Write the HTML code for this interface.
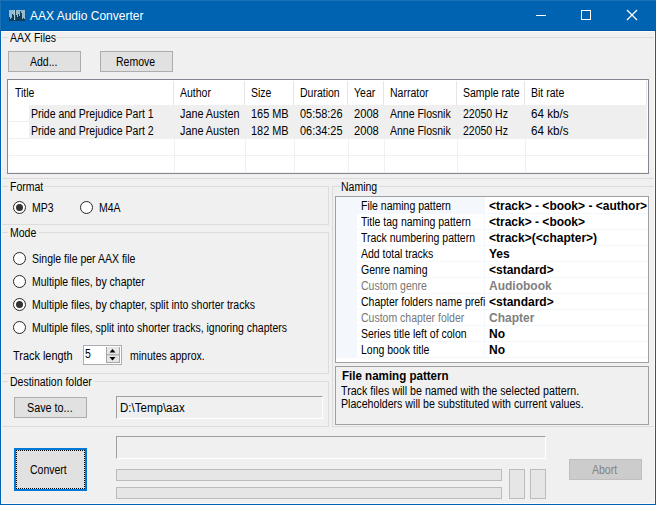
<!DOCTYPE html>
<html><head><meta charset="utf-8">
<style>
*{box-sizing:border-box;margin:0;padding:0}
html,body{width:656px;height:505px;overflow:hidden}
body{position:relative;background:#0063B1;font-family:"Liberation Sans",sans-serif;font-size:12px;color:#000}
.a{position:absolute}
.t{position:absolute;white-space:nowrap;line-height:14px;font-size:12px;transform-origin:0 0}
.radio{position:absolute;width:13px;height:13px;border-radius:50%;border:1px solid #262626;background:#fff}
.radio.on::after{content:"";position:absolute;left:2px;top:2px;width:7px;height:7px;border-radius:50%;background:#333}
</style></head><body>
<div class="a" style="left:0px;top:0px;width:656px;height:1px;background:#1B71B5"></div>
<div class="a" style="left:0px;top:0px;width:1px;height:31px;background:#1B71B5"></div>
<div class="a" style="left:0px;top:30px;width:656px;height:1px;background:#0059A8"></div>
<div class="a" style="left:1px;top:31px;width:654px;height:473px;background:#F0F0F0"></div>
<div class="a" style="left:1px;top:31px;width:654px;height:1px;background:#FCFAF6"></div>
<div class="a" style="left:1px;top:31px;width:1px;height:473px;background:#FCFAF6"></div>
<div class="a" style="left:654px;top:31px;width:1px;height:473px;background:#FCFAF6"></div>
<div class="a" style="left:1px;top:503px;width:654px;height:1px;background:#FCFAF6"></div>
<svg class="a" style="left:9px;top:10px" width="16" height="11" viewBox="0 0 16 11" shape-rendering="crispEdges">
<rect width="16" height="11" fill="#96B9CC"/><rect x="5" width="1" height="11" fill="#A6D0E0"/><rect x="0" y="7" width="1" height="4" fill="#123D59"/><rect x="1" y="9" width="1" height="2" fill="#123D59"/><rect x="2" y="8" width="1" height="3" fill="#123D59"/><rect x="3" y="4" width="1" height="7" fill="#123D59"/><rect x="4" y="5" width="1" height="6" fill="#123D59"/><rect x="5" y="10" width="1" height="1" fill="#123D59"/><rect x="7" y="5" width="1" height="6" fill="#123D59"/><rect x="8" y="6.5" width="1" height="4.5" fill="#123D59"/><rect x="9" y="4" width="1" height="7" fill="#123D59"/><rect x="10" y="5.5" width="1" height="5.5" fill="#123D59"/><rect x="11" y="1" width="1" height="10" fill="#123D59"/><rect x="12" y="3" width="1" height="8" fill="#123D59"/><rect x="13" y="9" width="1" height="2" fill="#123D59"/><rect x="14" y="7.5" width="1" height="3.5" fill="#123D59"/><rect x="15" y="9" width="1" height="2" fill="#123D59"/><rect x="6" y="0" width="1" height="11" fill="#A8123E"/>
</svg>
<div class="t" style="left:30px;top:9px;color:#fff">AAX Audio Converter</div>
<div class="a" style="left:536px;top:15px;width:10px;height:1px;background:#fff"></div>
<div class="a" style="left:581px;top:10px;width:10px;height:10px;border:1px solid #fff"></div>
<svg class="a" style="left:626px;top:9px" width="12" height="12" viewBox="0 0 12 12"><path d="M1 1L11 11M11 1L1 11" stroke="#fff" stroke-width="1.3"/></svg>
<div class="a" style="left:2px;top:37px;width:6px;height:1px;background:#DCDCDC"></div>
<div class="a" style="left:56px;top:37px;width:598px;height:1px;background:#DCDCDC"></div>
<div class="a" style="left:2px;top:178px;width:652px;height:1px;background:#DCDCDC"></div>
<div class="t" style="left:10px;top:31px;transform:scaleX(0.875)">AAX Files</div>
<div class="a" style="left:8px;top:51px;width:73px;height:21px;background:#E1E1E1;border:1px solid #ADADAD"></div>
<div class="t" style="left:30px;top:55px;transform:scaleX(0.875)">Add...</div>
<div class="a" style="left:100px;top:51px;width:73px;height:21px;background:#E1E1E1;border:1px solid #ADADAD"></div>
<div class="t" style="left:116px;top:55px;transform:scaleX(0.875)">Remove</div>
<div class="a" style="left:7px;top:79px;width:642px;height:95px;background:#fff;border:1px solid #828790"></div>
<div class="a" style="left:173px;top:81px;width:1px;height:24px;background:#E5E5E5"></div>
<div class="a" style="left:244px;top:81px;width:1px;height:24px;background:#E5E5E5"></div>
<div class="a" style="left:293px;top:81px;width:1px;height:24px;background:#E5E5E5"></div>
<div class="a" style="left:347px;top:81px;width:1px;height:24px;background:#E5E5E5"></div>
<div class="a" style="left:383px;top:81px;width:1px;height:24px;background:#E5E5E5"></div>
<div class="a" style="left:456px;top:81px;width:1px;height:24px;background:#E5E5E5"></div>
<div class="a" style="left:524px;top:81px;width:1px;height:24px;background:#E5E5E5"></div>
<div class="a" style="left:646px;top:81px;width:1px;height:24px;background:#E5E5E5"></div>
<div class="a" style="left:9px;top:121px;width:638px;height:1px;background:#F0F0F0"></div>
<div class="a" style="left:9px;top:138px;width:638px;height:1px;background:#F0F0F0"></div>
<div class="a" style="left:9px;top:155px;width:638px;height:1px;background:#F0F0F0"></div>
<div class="a" style="left:9px;top:172px;width:638px;height:1px;background:#F0F0F0"></div>
<div class="a" style="left:174px;top:105px;width:1px;height:68px;background:#F0F0F0"></div>
<div class="a" style="left:245px;top:105px;width:1px;height:68px;background:#F0F0F0"></div>
<div class="a" style="left:294px;top:105px;width:1px;height:68px;background:#F0F0F0"></div>
<div class="a" style="left:348px;top:105px;width:1px;height:68px;background:#F0F0F0"></div>
<div class="a" style="left:384px;top:105px;width:1px;height:68px;background:#F0F0F0"></div>
<div class="a" style="left:457px;top:105px;width:1px;height:68px;background:#F0F0F0"></div>
<div class="a" style="left:525px;top:105px;width:1px;height:68px;background:#F0F0F0"></div>
<div class="a" style="left:29px;top:105px;width:618px;height:33px;background:#EFEFEF"></div>
<div class="t" style="left:15px;top:86px;transform:scaleX(0.875)">Title</div>
<div class="t" style="left:180px;top:86px;transform:scaleX(0.875)">Author</div>
<div class="t" style="left:251px;top:86px;transform:scaleX(0.875)">Size</div>
<div class="t" style="left:300px;top:86px;transform:scaleX(0.875)">Duration</div>
<div class="t" style="left:354px;top:86px;transform:scaleX(0.875)">Year</div>
<div class="t" style="left:390px;top:86px;transform:scaleX(0.875)">Narrator</div>
<div class="t" style="left:463px;top:86px;transform:scaleX(0.875)">Sample rate</div>
<div class="t" style="left:531px;top:86px;transform:scaleX(0.875)">Bit rate</div>
<div class="t" style="left:31px;top:107px;transform:scaleX(0.875)">Pride and Prejudice Part 1</div>
<div class="t" style="left:180px;top:107px;transform:scaleX(0.9)">Jane Austen</div>
<div class="t" style="left:251px;top:107px;transform:scaleX(0.91)">165 MB</div>
<div class="t" style="left:300px;top:107px;transform:scaleX(0.91)">05:58:26</div>
<div class="t" style="left:354px;top:107px;transform:scaleX(0.93)">2008</div>
<div class="t" style="left:390px;top:107px;transform:scaleX(0.875)">Anne Flosnik</div>
<div class="t" style="left:463px;top:107px;transform:scaleX(0.875)">22050 Hz</div>
<div class="t" style="left:531px;top:107px;transform:scaleX(0.97)">64 kb/s</div>
<div class="t" style="left:31px;top:124px;transform:scaleX(0.875)">Pride and Prejudice Part 2</div>
<div class="t" style="left:180px;top:124px;transform:scaleX(0.9)">Jane Austen</div>
<div class="t" style="left:251px;top:124px;transform:scaleX(0.91)">182 MB</div>
<div class="t" style="left:300px;top:124px;transform:scaleX(0.91)">06:34:25</div>
<div class="t" style="left:354px;top:124px;transform:scaleX(0.93)">2008</div>
<div class="t" style="left:390px;top:124px;transform:scaleX(0.875)">Anne Flosnik</div>
<div class="t" style="left:463px;top:124px;transform:scaleX(0.875)">22050 Hz</div>
<div class="t" style="left:531px;top:124px;transform:scaleX(0.97)">64 kb/s</div>
<div class="a" style="left:2px;top:186px;width:6px;height:1px;background:#DCDCDC"></div>
<div class="a" style="left:44px;top:186px;width:285px;height:1px;background:#DCDCDC"></div>
<div class="a" style="left:2px;top:224px;width:327px;height:1px;background:#DCDCDC"></div>
<div class="a" style="left:328px;top:186px;width:1px;height:39px;background:#DCDCDC"></div>
<div class="t" style="left:10px;top:180px;transform:scaleX(0.875)">Format</div>
<div class="radio on" style="left:13px;top:201px"></div>
<div class="t" style="left:32px;top:201px;transform:scaleX(0.875)">MP3</div>
<div class="radio" style="left:80px;top:201px"></div>
<div class="t" style="left:99px;top:201px;transform:scaleX(0.875)">M4A</div>
<div class="a" style="left:2px;top:232px;width:6px;height:1px;background:#DCDCDC"></div>
<div class="a" style="left:39px;top:232px;width:290px;height:1px;background:#DCDCDC"></div>
<div class="a" style="left:2px;top:373px;width:327px;height:1px;background:#DCDCDC"></div>
<div class="a" style="left:328px;top:232px;width:1px;height:142px;background:#DCDCDC"></div>
<div class="t" style="left:10px;top:226px;transform:scaleX(0.875)">Mode</div>
<div class="radio" style="left:13px;top:252px"></div>
<div class="t" style="left:32px;top:252px;transform:scaleX(0.875)">Single file per AAX file</div>
<div class="radio" style="left:13px;top:275px"></div>
<div class="t" style="left:32px;top:275px;transform:scaleX(0.875)">Multiple files, by chapter</div>
<div class="radio on" style="left:13px;top:298px"></div>
<div class="t" style="left:32px;top:298px;transform:scaleX(0.875)">Multiple files, by chapter, split into shorter tracks</div>
<div class="radio" style="left:13px;top:321px"></div>
<div class="t" style="left:32px;top:321px;transform:scaleX(0.875)">Multiple files, split into shorter tracks, ignoring chapters</div>
<div class="t" style="left:13px;top:349px;transform:scaleX(0.91)">Track length</div>
<div class="a" style="left:83px;top:345px;width:39px;height:20px;background:#fff;border:1px solid #ABADB3"></div>
<div class="a" style="left:106px;top:347px;width:14px;height:16px;background:#E6E6E6"></div>
<div class="a" style="left:106px;top:347px;width:1px;height:16px;background:#A6A6A6"></div>
<div class="a" style="left:119px;top:347px;width:1px;height:16px;background:#A6A6A6"></div>
<div class="a" style="left:106px;top:362px;width:14px;height:1px;background:#A6A6A6"></div>
<div class="a" style="left:107px;top:354px;width:12px;height:1px;background:#B4B4B4"></div>
<div class="a" style="left:107px;top:355px;width:12px;height:1px;background:#D0D0D0"></div>
<svg class="a" style="left:106px;top:347px" width="14" height="16" viewBox="0 0 14 16"><path d="M3.5 5.5H9.5L6.5 2Z" fill="#000"/><path d="M3.5 10H9.5L6.5 13.5Z" fill="#000"/></svg>
<div class="t" style="left:85px;top:347px;transform:scaleX(0.875)">5</div>
<div class="t" style="left:130px;top:349px;transform:scaleX(0.875)">minutes approx.</div>
<div class="a" style="left:2px;top:381px;width:6px;height:1px;background:#DCDCDC"></div>
<div class="a" style="left:94px;top:381px;width:235px;height:1px;background:#DCDCDC"></div>
<div class="a" style="left:2px;top:426px;width:327px;height:1px;background:#DCDCDC"></div>
<div class="a" style="left:328px;top:381px;width:1px;height:46px;background:#DCDCDC"></div>
<div class="t" style="left:10px;top:375px;transform:scaleX(0.875)">Destination folder</div>
<div class="a" style="left:14px;top:397px;width:73px;height:21px;background:#E1E1E1;border:1px solid #ADADAD"></div>
<div class="t" style="left:27px;top:401px;transform:scaleX(0.9)">Save to...</div>
<div class="a" style="left:116px;top:396px;width:207px;height:23px;background:#F0F0F0;border-top:1px solid #A0A0A0;border-left:1px solid #A0A0A0;border-right:1px solid #fff;border-bottom:1px solid #fff"></div>
<div class="t" style="left:120px;top:401px;transform:scaleX(0.96)">D:\Temp\aax</div>
<div class="a" style="left:332px;top:186px;width:9px;height:1px;background:#DCDCDC"></div>
<div class="a" style="left:379px;top:186px;width:275px;height:1px;background:#DCDCDC"></div>
<div class="a" style="left:332px;top:426px;width:322px;height:1px;background:#DCDCDC"></div>
<div class="a" style="left:332px;top:186px;width:1px;height:241px;background:#DCDCDC"></div>
<div class="t" style="left:341px;top:180px;transform:scaleX(0.875)">Naming</div>
<div class="a" style="left:335px;top:196px;width:314px;height:167px;background:#fff;border:1px solid #A0A0A0"></div>
<div class="a" style="left:336px;top:197px;width:21px;height:161px;background:#F4F7FC"></div>
<div class="a" style="left:336px;top:197px;width:148px;height:16px;background:#F4F7FC"></div>
<div class="a" style="left:336px;top:213px;width:312px;height:1px;background:#F4F7FC"></div>
<div class="a" style="left:336px;top:229px;width:312px;height:1px;background:#F4F7FC"></div>
<div class="a" style="left:336px;top:245px;width:312px;height:1px;background:#F4F7FC"></div>
<div class="a" style="left:336px;top:261px;width:312px;height:1px;background:#F4F7FC"></div>
<div class="a" style="left:336px;top:277px;width:312px;height:1px;background:#F4F7FC"></div>
<div class="a" style="left:336px;top:293px;width:312px;height:1px;background:#F4F7FC"></div>
<div class="a" style="left:336px;top:309px;width:312px;height:1px;background:#F4F7FC"></div>
<div class="a" style="left:336px;top:325px;width:312px;height:1px;background:#F4F7FC"></div>
<div class="a" style="left:336px;top:341px;width:312px;height:1px;background:#F4F7FC"></div>
<div class="a" style="left:336px;top:357px;width:312px;height:1px;background:#F4F7FC"></div>
<div class="a" style="left:484px;top:197px;width:1px;height:161px;background:#F4F7FC"></div>
<div class="t" style="left:361px;top:199px;transform:scaleX(0.875)">File naming pattern</div>
<div class="t" style="left:489px;top:199px;font-weight:bold">&lt;track&gt; - &lt;book&gt; - &lt;author&gt;</div>
<div class="t" style="left:361px;top:215px;transform:scaleX(0.875)">Title tag naming pattern</div>
<div class="t" style="left:489px;top:215px;font-weight:bold">&lt;track&gt; - &lt;book&gt;</div>
<div class="t" style="left:361px;top:231px;transform:scaleX(0.875)">Track numbering pattern</div>
<div class="t" style="left:489px;top:231px;font-weight:bold">&lt;track&gt;(&lt;chapter&gt;)</div>
<div class="t" style="left:361px;top:247px;transform:scaleX(0.875)">Add total tracks</div>
<div class="t" style="left:489px;top:247px;font-weight:bold">Yes</div>
<div class="t" style="left:361px;top:263px;transform:scaleX(0.875)">Genre naming</div>
<div class="t" style="left:489px;top:263px;font-weight:bold">&lt;standard&gt;</div>
<div class="t" style="left:361px;top:279px;color:#777777;transform:scaleX(0.875)">Custom genre</div>
<div class="t" style="left:489px;top:279px;color:#808080;font-weight:bold">Audiobook</div>
<div class="t" style="left:361px;top:295px;transform:scaleX(0.875)">Chapter folders name prefi</div>
<div class="t" style="left:489px;top:295px;font-weight:bold">&lt;standard&gt;</div>
<div class="t" style="left:361px;top:311px;color:#777777;transform:scaleX(0.875)">Custom chapter folder</div>
<div class="t" style="left:489px;top:311px;color:#808080;font-weight:bold">Chapter</div>
<div class="t" style="left:361px;top:327px;transform:scaleX(0.875)">Series title left of colon</div>
<div class="t" style="left:489px;top:327px;font-weight:bold">No</div>
<div class="t" style="left:361px;top:343px;transform:scaleX(0.875)">Long book title</div>
<div class="t" style="left:489px;top:343px;font-weight:bold">No</div>
<div class="a" style="left:335px;top:366px;width:314px;height:59px;background:#F0F0F0;border:1px solid #A0A0A0"></div>
<div class="t" style="left:342px;top:369px;font-weight:bold;transform:scaleX(0.963)">File naming pattern</div>
<div class="t" style="left:341px;top:384px;transform:scaleX(0.89)">Track files will be named with the selected pattern.</div>
<div class="t" style="left:341px;top:397px;transform:scaleX(0.885)">Placeholders will be substituted with current values.</div>
<div class="a" style="left:14px;top:448px;width:73px;height:43px;background:#E1E1E1;border:2px solid #0078D7"></div>
<div class="a" style="left:16px;top:450px;width:69px;height:39px;border:1px dotted #000"></div>
<div class="t" style="left:30px;top:463px;transform:scaleX(0.875)">Convert</div>
<div class="a" style="left:116px;top:436px;width:430px;height:23px;background:#F0F0F0;border-top:1px solid #A0A0A0;border-left:1px solid #A0A0A0;border-right:1px solid #fff;border-bottom:1px solid #fff"></div>
<div class="a" style="left:116px;top:469px;width:386px;height:12px;background:#E6E6E6;border:1px solid #BCBCBC"></div>
<div class="a" style="left:116px;top:487px;width:386px;height:12px;background:#E6E6E6;border:1px solid #BCBCBC"></div>
<div class="a" style="left:509px;top:469px;width:16px;height:30px;background:#E6E6E6;border:1px solid #BCBCBC"></div>
<div class="a" style="left:530px;top:469px;width:16px;height:30px;background:#E6E6E6;border:1px solid #BCBCBC"></div>
<div class="a" style="left:569px;top:459px;width:73px;height:21px;background:#CCCCCC;border:1px solid #BFBFBF"></div>
<div class="t" style="left:592px;top:463px;color:#838383;transform:scaleX(0.875)">Abort</div>
</body></html>
